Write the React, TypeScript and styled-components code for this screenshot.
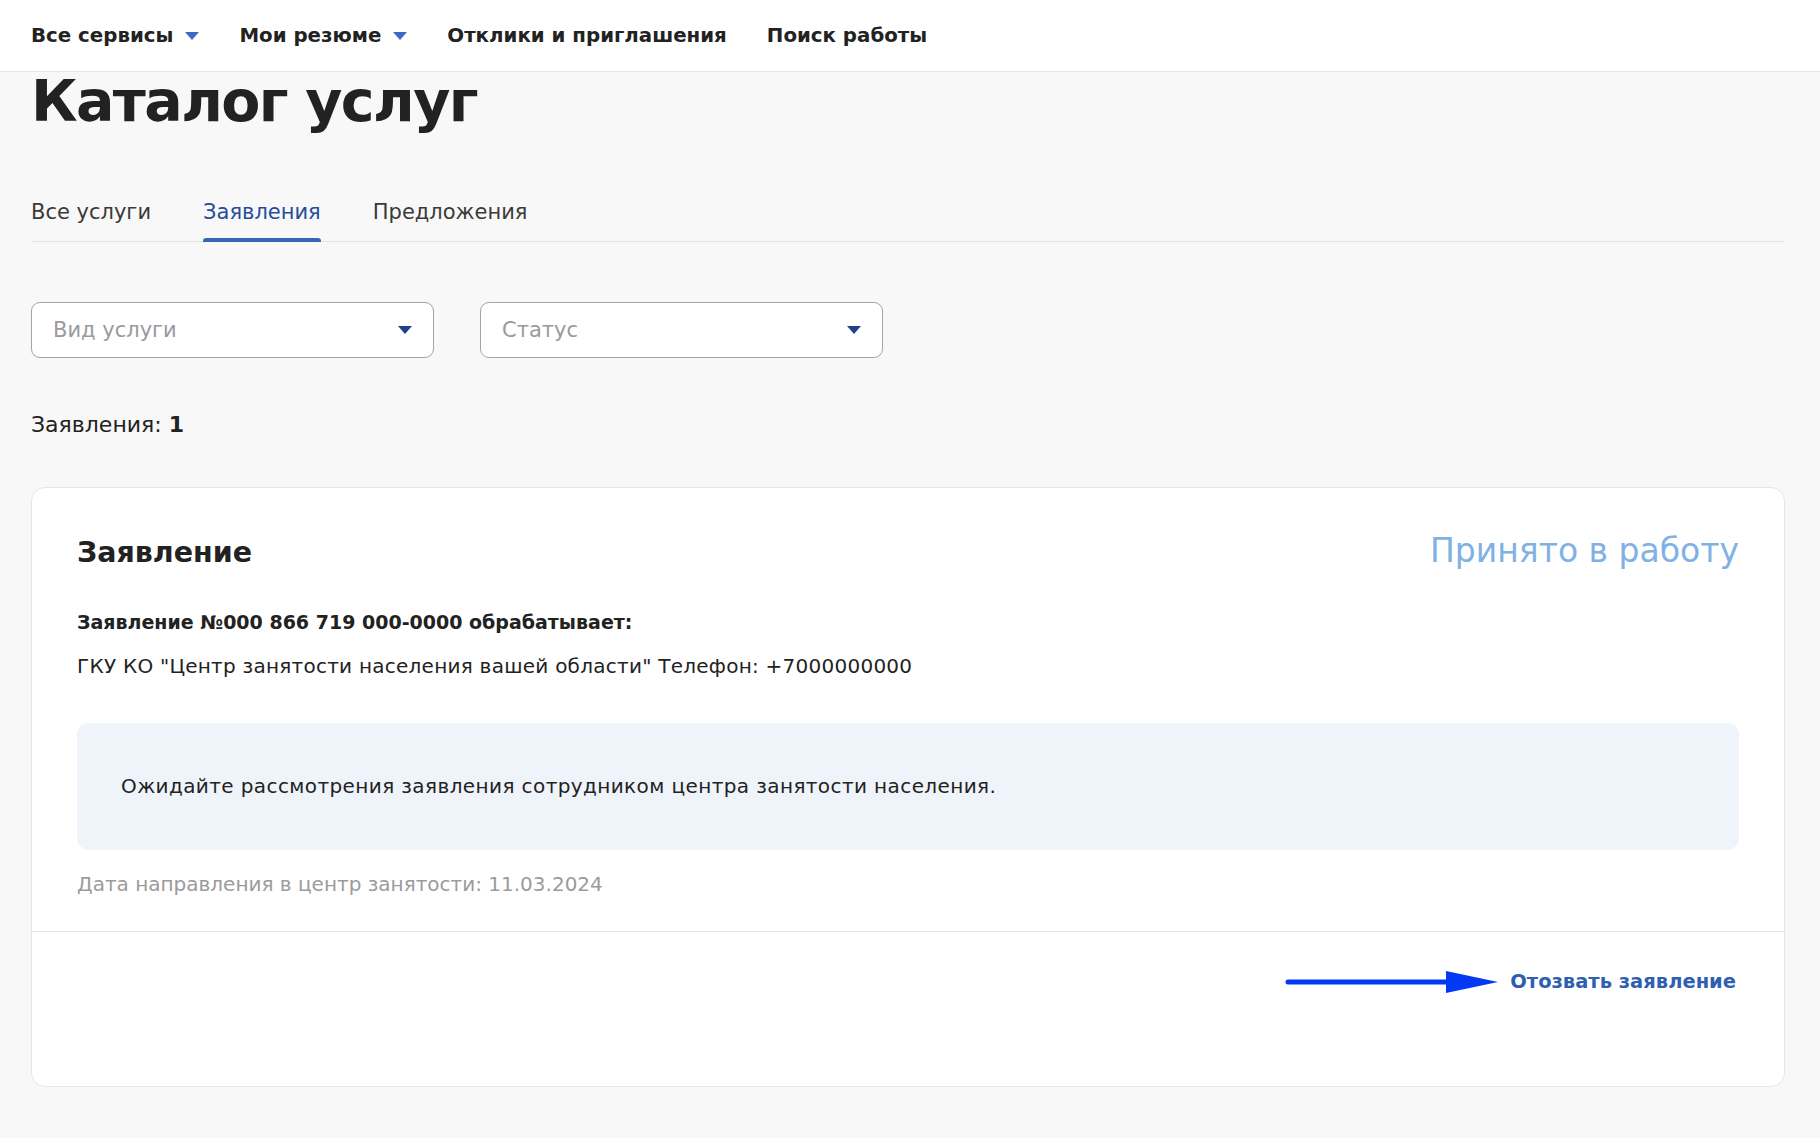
import React from "react";
import styled, { createGlobalStyle } from "styled-components";

const GlobalStyle = createGlobalStyle`
  html, body {
    margin: 0;
    padding: 0;
    background: #f8f8f8;
    font-family: "DejaVu Sans", "Noto Sans", sans-serif;
    color: #222;
  }
  * {
    box-sizing: border-box;
  }
`;

const Header = styled.header`
  height: 72px;
  background: #fff;
  border-bottom: 1px solid #e6e6e6;
  display: flex;
  align-items: center;
  gap: 40px;
  padding: 0 31px;
`;

const NavItem = styled.div`
  display: flex;
  align-items: center;
  gap: 12px;
  font-size: 19.8px;
  font-weight: 600;
  color: #222;
`;

const Caret = styled.span<{ $color?: string }>`
  width: 0;
  height: 0;
  border-left: 7px solid transparent;
  border-right: 7px solid transparent;
  border-top: 8px solid ${(p) => p.$color || "#3a6cc0"};
`;

const Main = styled.main`
  padding: 0 35px 0 31px;
`;

const Title = styled.h1`
  margin: 4px 0 0;
  font-size: 57px;
  line-height: 50px;
  letter-spacing: -1.6px;
  font-weight: 700;
  color: #222;
`;

const Tabs = styled.div`
  margin-top: 74px;
  display: flex;
  gap: 52px;
  border-bottom: 1px solid #e4e4e4;
`;

const Tab = styled.div<{ $active?: boolean }>`
  position: relative;
  font-size: 21px;
  line-height: 24px;
  padding-bottom: 17px;
  color: ${(p) => (p.$active ? "#264c9c" : "#3a3a3a")};

  &::after {
    content: "";
    display: ${(p) => (p.$active ? "block" : "none")};
    position: absolute;
    left: 0;
    right: 0;
    bottom: -1px;
    height: 4px;
    border-radius: 3px 3px 0 0;
    background: #3866b6;
  }
`;

const Filters = styled.div`
  margin-top: 60px;
  display: flex;
  gap: 46px;
`;

const Select = styled.div`
  width: 403px;
  height: 56px;
  background: #fff;
  border: 1px solid #a3a3aa;
  border-radius: 9px;
  display: flex;
  align-items: center;
  justify-content: space-between;
  padding: 0 21px 0 21px;
  font-size: 21px;
  color: #9a9a9e;
`;

const Count = styled.div`
  margin-top: 54px;
  font-size: 22px;
  line-height: 26px;
  color: #222;

  b {
    font-weight: 700;
  }
`;

const Card = styled.section`
  margin-top: 49px;
  background: #fff;
  border: 1px solid #e6e6e6;
  border-radius: 14px;
`;

const CardBody = styled.div`
  padding: 42px 45px 35px;
`;

const CardHead = styled.div`
  display: flex;
  align-items: baseline;
  justify-content: space-between;
`;

const CardTitle = styled.h2`
  margin: 0;
  font-size: 28.5px;
  line-height: 32px;
  font-weight: 700;
  color: #222;
`;

const Status = styled.div`
  font-size: 33px;
  line-height: 36px;
  padding-top: 3px;
  color: #80b1e4;
`;

const Line = styled.p<{ $bold?: boolean; $gap: number; $muted?: boolean; $spacing?: number }>`
  margin: ${(p) => p.$gap}px 0 0;
  font-size: ${(p) => (p.$bold ? 19 : 20)}px;
  line-height: 24px;
  letter-spacing: ${(p) => p.$spacing || 0}px;
  font-weight: ${(p) => (p.$bold ? 700 : 400)};
  color: ${(p) => (p.$muted ? "#9b9b9b" : "#222")};
`;

const Notice = styled.div`
  margin-top: 45px;
  background: #eff4fb;
  border-radius: 12px;
  padding: 51px 44px 52px;
  font-size: 20px;
  line-height: 24px;
  letter-spacing: 0.4px;
  color: #222;
`;

const CardFooter = styled.div`
  border-top: 1px solid #e6e6e6;
  padding: 38px 48px 92px;
  display: flex;
  justify-content: flex-end;
  align-items: center;
  gap: 11px;
`;

const Withdraw = styled.a`
  font-size: 19.5px;
  line-height: 24px;
  font-weight: 700;
  color: #2f5fb0;
  text-decoration: none;
  cursor: pointer;
`;

const Arrow = () => (
  <svg width="214" height="24" viewBox="0 0 214 24">
    <line x1="3" y1="12" x2="165" y2="12" stroke="#0339f5" strokeWidth="5" strokeLinecap="round" />
    <polygon points="161,1 213,12 161,23" fill="#0339f5" />
  </svg>
);

const navItems = [
  { label: "Все сервисы", menu: true },
  { label: "Мои резюме", menu: true },
  { label: "Отклики и приглашения" },
  { label: "Поиск работы" },
];

const tabs = ["Все услуги", "Заявления", "Предложения"];

export default function App() {
  return (
    <>
      <GlobalStyle />
      <Header>
        {navItems.map((item) => (
          <NavItem key={item.label}>
            {item.label}
            {item.menu && <Caret />}
          </NavItem>
        ))}
      </Header>
      <Main>
        <Title>Каталог услуг</Title>
        <Tabs>
          {tabs.map((t) => (
            <Tab key={t} $active={t === "Заявления"}>
              {t}
            </Tab>
          ))}
        </Tabs>
        <Filters>
          <Select>
            Вид услуги
            <Caret $color="#1f418c" />
          </Select>
          <Select>
            Статус
            <Caret $color="#1f418c" />
          </Select>
        </Filters>
        <Count>
          Заявления: <b>1</b>
        </Count>
        <Card>
          <CardBody>
            <CardHead>
              <CardTitle>Заявление</CardTitle>
              <Status>Принято в работу</Status>
            </CardHead>
            <Line $bold $gap={41}>
              Заявление №000 866 719 000-0000 обрабатывает:
            </Line>
            <Line $gap={20} $spacing={0.25}>
              ГКУ КО "Центр занятости населения вашей области" Телефон: +7000000000
            </Line>
            <Notice>
              Ожидайте рассмотрения заявления сотрудником центра занятости населения.
            </Notice>
            <Line $muted $gap={22}>
              Дата направления в центр занятости: 11.03.2024
            </Line>
          </CardBody>
          <CardFooter>
            <Arrow />
            <Withdraw>Отозвать заявление</Withdraw>
          </CardFooter>
        </Card>
      </Main>
    </>
  );
}
